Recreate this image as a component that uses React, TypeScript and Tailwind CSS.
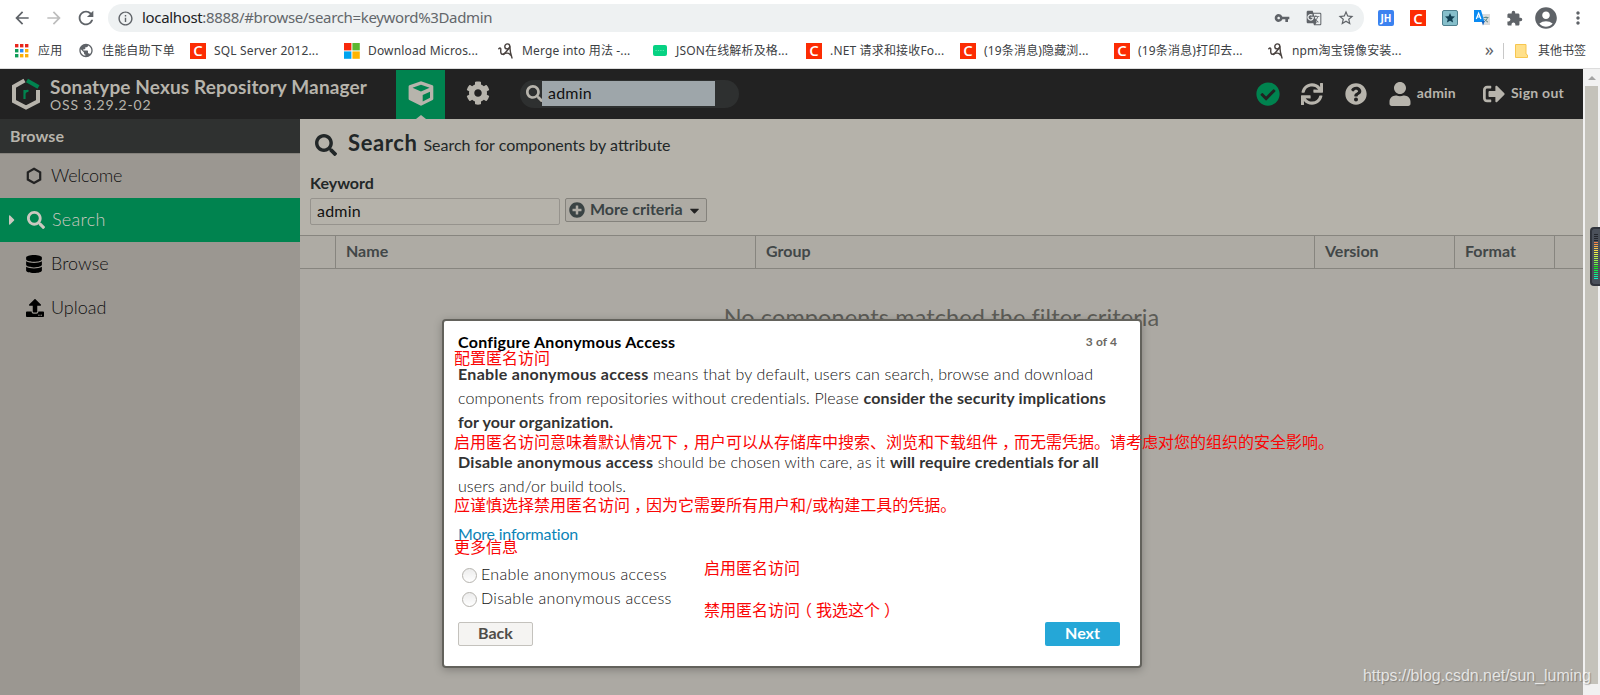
import type { ReactNode } from "react";
import {
    FaCaretDown,
    FaCaretRight,
    FaCheckCircle,
    FaCog,
    FaDatabase,
    FaPlusCircle,
    FaQuestionCircle,
    FaSearch,
    FaSignOutAlt,
    FaSync,
    FaUpload,
    FaUser,
} from "react-icons/fa";
import {
    MdAccountCircle,
    MdArrowBack,
    MdArrowForward,
    MdExtension,
    MdGTranslate,
    MdInfoOutline,
    MdMoreVert,
    MdPublic,
    MdRefresh,
    MdStar,
    MdStarBorder,
    MdVpnKey,
} from "react-icons/md";

function CsdnIcon() {
    return (
        <span className="flex h-4 w-4 items-center justify-center bg-[#fc2c03] font-['Open_Sans',sans-serif] text-[15px] leading-none font-semibold text-white">
            C
        </span>
    );
}

function AppsIcon() {
    const colors = ["#e8261c", "#e8261c", "#e8261c", "#0f9d58", "#2a8cf5", "#fbaf08", "#0f9d58", "#fbaf08", "#fbaf08"];
    return (
        <svg width="14" height="14" viewBox="0 0 14 14">
            {colors.map((color, i) => (
                <rect key={i} x={(i % 3) * 5} y={Math.floor(i / 3) * 5} width="3.4" height="3.4" fill={color} />
            ))}
        </svg>
    );
}

function WindowsIcon() {
    return (
        <svg width="16" height="16" viewBox="0 0 16 16">
            <path d="M0 0h7.4v7.4H0z" fill="#f8290c" />
            <path d="M8.4 0h7.4v7.4H8.4z" fill="#5cb832" />
            <path d="M0 8.4h7.4v7.4H0z" fill="#00a4ef" />
            <path d="M8.4 8.4h7.4v7.4H8.4z" fill="#ffb400" />
        </svg>
    );
}

function DoodleIcon() {
    return (
        <svg width="16" height="16" viewBox="0 0 16 16" fill="none" stroke="#4a4340" strokeWidth="1.4" strokeLinecap="round">
            <path d="M.8 5.800C2 4.500 3 5 2.800 6.800C2.500 9.500 3 11.500 4.800 11.200C7 10.800 9 8 11 5" />
            <circle cx="9.300" cy="3.400" r="2.500" />
            <path d="M11.800 3.500C12 8 12.500 11 14 15M5.500 11.500C8 9.500 11 9.800 12.500 12" />
        </svg>
    );
}

function JsonIcon() {
    return (
        <svg width="14" height="12" viewBox="0 0 14 12">
            <rect width="14" height="11" rx="2" fill="#06d283" />
            <path d="M2.500 5.500h9" stroke="#5be8b0" strokeWidth="1.200" strokeDasharray="1.200 1.200" />
        </svg>
    );
}

function FolderIcon() {
    return (
        <svg width="14" height="16" viewBox="0 0 14 16">
            <path d="M.5 1.500h10.500v9.500l1.500 1v2.500H.5z" fill="#ffe08a" stroke="#f7c64f" />
        </svg>
    );
}

function TranslateIcon() {
    return (
        <svg width="16" height="16" viewBox="0 0 16 16">
            <path d="M7 4h9v11H9z" fill="#dcdcdc" />
            <path d="M9.500 7.500h5M12 6.500v1M13.500 7.500c-.5 2-2 3.500-3 4M10.500 9c1 1.500 2 2.500 3.500 3" stroke="#5e8a8a" fill="none" />
            <path d="M0 0h7l3.500 12H0z" fill="#0a8bf2" />
            <path d="M7.500 11h3.300L9 15.500z" fill="#1565c0" />
            <path d="M2.300 9 4.600 3.200 6.900 9M3.200 7h2.800" stroke="#fff" strokeWidth="1.200" fill="none" />
        </svg>
    );
}

function NexusLogo() {
    return (
        <svg width="28" height="32" viewBox="0 0 28 32" fill="none" strokeWidth="4">
            <path d="M12.500 2.500 2 8.500v14.800L14 29.500l12-6.200V12" stroke="#b7b4ac" />
            <path d="M15 2.500 26.500 9" stroke="#00834f" />
            <path d="M12.500 21V12M12.500 15.500c.5-2 2-2.800 4-2.500" stroke="#00834f" strokeWidth="2.200" />
        </svg>
    );
}

function CubeIcon() {
    return (
        <svg width="26" height="25" viewBox="0 0 26 25">
            <path
                fillRule="evenodd"
                fill="#b7b4ac"
                d="M13 .3 24.500 4.300Q25.300 4.600 25.300 5.500V17.800Q25.300 18.600 24.600 19L13.600 24.500Q13 24.800 12.400 24.500L1.300 19Q.6 18.600.6 17.800V5.500Q.6 4.600 1.400 4.300ZM13 3.700 4.500 6.800 13 10.500 21.600 6.800ZM22 10.700 14.700 14V20.500L22 16.800Z"
            />
        </svg>
    );
}

function HexagonIcon() {
    return (
        <svg width="16" height="18" viewBox="0 0 16 18" fill="none" stroke="#222" strokeWidth="2.200">
            <path d="M8 1.800 14.200 5.300v7.200L8 16 1.800 12.500V5.300z" />
        </svg>
    );
}

const bookmarks: { icon: ReactNode; title: string; width: string }[] = [
    { icon: <AppsIcon />, title: "应用", width: "w-16" },
    { icon: <MdPublic size={17} color="#5f6368" />, title: "佳能自助下单", width: "w-28" },
    { icon: <CsdnIcon />, title: "SQL Server 2012...", width: "w-[154px]" },
    { icon: <WindowsIcon />, title: "Download Micros...", width: "w-[154px]" },
    { icon: <DoodleIcon />, title: "Merge into 用法 -...", width: "w-[154px]" },
    { icon: <JsonIcon />, title: "JSON在线解析及格...", width: "w-[154px]" },
    { icon: <CsdnIcon />, title: ".NET 请求和接收Fo...", width: "w-[154px]" },
    { icon: <CsdnIcon />, title: "(19条消息)隐藏浏...", width: "w-[154px]" },
    { icon: <CsdnIcon />, title: "(19条消息)打印去...", width: "w-[154px]" },
    { icon: <DoodleIcon />, title: "npm淘宝镜像安装...", width: "w-[154px]" },
];

function BrowserBar() {
    return (
        <div className="h-[69px] shrink-0 border-b border-[#dcdcdc] bg-white font-['Noto_Sans','Noto_Sans_CJK_SC',sans-serif]">
            <div className="flex h-9 items-center pr-[14px] pl-3 text-[#5f6368]">
                <MdArrowBack size={20} />
                <MdArrowForward size={20} className="ml-3 text-[#bdbdbd]" />
                <MdRefresh size={22} className="ml-[11px]" />
                <div className="ml-[11px] flex h-7 flex-1 items-center rounded-full bg-[#eef1f2] pr-[10px] pl-[9px]">
                    <MdInfoOutline size={17} />
                    <span className="-mt-0.5 ml-2 text-[15px] tracking-[-0.34px] text-[#63676b]">
                        <span className="text-[#202124]">localhost</span>:8888/#browse/search=keyword%3Dadmin
                    </span>
                    <div className="ml-auto flex items-center gap-4">
                        <MdVpnKey size={16} />
                        <MdGTranslate size={16} />
                        <MdStarBorder size={18} className="-mx-px" />
                    </div>
                </div>
                <div className="ml-[14px] flex items-center gap-4">
                    <span className="flex h-4 w-4 items-center justify-center rounded-xs bg-[#3b82f0] text-[10px] font-bold text-white">JH</span>
                    <CsdnIcon />
                    <span className="flex h-4 w-4 items-center justify-center rounded-xs border border-[#4d7f8d] bg-[#86bfcb] text-[#123f52]">
                        <MdStar size={12} className="shrink-0" />
                    </span>
                    <TranslateIcon />
                    <MdExtension size={17} className="-mr-px" />
                    <MdAccountCircle size={26} className="-mx-[5px]" />
                    <MdMoreVert size={20} className="-mx-[2px]" />
                </div>
            </div>
            <div className="flex h-[29px] items-center pr-[14px] pl-[14px] text-xs whitespace-nowrap text-[#3c4043]">
                {bookmarks.map((bookmark) => (
                    <div key={bookmark.title} className={`flex shrink-0 items-center gap-2 ${bookmark.width}`}>
                        <span className="flex w-4 shrink-0 justify-center">{bookmark.icon}</span>
                        <span className="tracking-[0.16px]">{bookmark.title}</span>
                    </div>
                ))}
                <span className="mb-1 ml-auto text-lg leading-none text-[#5f6368]">»</span>
                <span className="ml-[9px] h-4 w-px bg-[#c8c8c8]" />
                <span className="ml-[11px]">
                    <FolderIcon />
                </span>
                <span className="ml-[9px]">其他书签</span>
            </div>
        </div>
    );
}

function Header() {
    return (
        <div className="flex h-[50px] shrink-0 items-center bg-[#222] pr-[19px] pl-[12px] text-[#b7b4ac]">
            <NexusLogo />
            <div className="ml-[10px] w-[346px] whitespace-nowrap">
                <div className="pt-px text-[19px] leading-5 font-bold tracking-[0.13px]">Sonatype Nexus Repository Manager</div>
                <div className="text-sm leading-4 tracking-[0.85px]">OSS 3.29.2-02</div>
            </div>
            <div className="mt-px flex h-[49px] w-[49px] flex-col items-center bg-[#00834f] pt-[11px]">
                <CubeIcon />
                <span className="mt-[9px] h-0 w-0 border-x-[5px] border-b-4 border-x-transparent border-b-[#b5b2aa]" />
            </div>
            <FaCog size={24} className="-mt-0.5 ml-[21px]" />
            <div className="ml-[30px] flex h-7 w-[219px] items-center rounded-full bg-[#2e3030] pl-[6px]">
                <FaSearch size={17} className="-mt-px" />
                <div className="-mt-0.5 -ml-px h-[25px] w-[173px] bg-[#9ea6aa] pl-1.5 leading-[24px] tracking-[0.2px] text-[#111]">admin</div>
            </div>
            <div className="ml-auto flex items-center pb-px text-sm font-bold">
                <FaCheckCircle size={24} color="#00834f" />
                <FaSync size={22} className="ml-[21px]" />
                <FaQuestionCircle size={22} className="ml-[22px]" />
                <FaUser size={24} className="ml-[21px]" />
                <span className="mb-px ml-[5px] tracking-[0.2px]">admin</span>
                <FaSignOutAlt size={22} className="ml-[27px]" />
                <span className="mb-px ml-1.5 tracking-[0.25px]">Sign out</span>
            </div>
        </div>
    );
}

function Sidebar() {
    return (
        <div className="w-[300px] shrink-0 bg-[#9b9791] text-lg font-light text-[#111]">
            <div className="h-[35px] border-b border-[#85827c] bg-[#2f3130] pl-[10px] text-base leading-[34px] font-bold tracking-[0.1px] text-[#b7b4ac]">
                Browse
            </div>
            <div className="flex h-11 items-center pl-[26px]">
                <HexagonIcon />
                <span className="mb-[3px] ml-[9px] tracking-[-0.25px]">Welcome</span>
            </div>
            <div className="flex h-11 items-center bg-[#00834f] pl-[7px] text-[#cbc8c0]">
                <FaCaretRight size={16} className="w-2.5" />
                <FaSearch size={18} className="ml-[10px]" />
                <span className="mb-[3px] ml-[7px] tracking-[0.3px]">Search</span>
            </div>
            <div className="flex h-11 items-center pl-[26px]">
                <FaDatabase size={18} className="w-4" color="#000" />
                <span className="mb-[3px] ml-[9px]">Browse</span>
            </div>
            <div className="flex h-11 items-center pl-[26px]">
                <FaUpload size={18} className="-mt-px" color="#000" />
                <span className="mb-[3px] ml-[7px]">Upload</span>
            </div>
        </div>
    );
}

function SearchPanel() {
    return (
        <div className="min-w-0 flex-1 bg-[#aca9a3]">
            <div className="h-[116px] bg-[#b5b2aa] pl-[10px] text-[#222728]">
                <div className="flex h-[50px] items-baseline pt-[9px] pl-[5px]">
                    <FaSearch size={22} className="translate-y-[5px]" />
                    <span className="ml-[11px] text-[22px] leading-[30px] font-bold tracking-[0.6px]">Search</span>
                    <span className="ml-1.5">Search for components by attribute</span>
                </div>
                <div className="flex h-[29px] items-center pb-px font-bold">Keyword</div>
                <div className="flex items-start">
                    <div className="h-[27px] w-[250px] rounded-xs border border-[#96938d] pl-1.5 leading-6 tracking-[0.2px] text-[#111]">admin</div>
                    <div className="ml-[5px] flex h-6 w-[142px] items-center rounded-xs border border-[#84827c] bg-[#aeaba4] pl-[3px] font-bold text-[#3a4344]">
                        <FaPlusCircle size={16} />
                        <span className="mb-0.5 ml-[5px] whitespace-nowrap">More criteria</span>
                        <FaCaretDown size={15} className="ml-1 text-[#222]" />
                    </div>
                </div>
            </div>
            <div className="flex h-[34px] border-y border-[#87857f] bg-[#aeaba4] leading-[30px] font-bold text-[#424748] *:border-r *:border-[#87857f] *:pl-[10px]">
                <div className="w-9" />
                <div className="w-[420px]">Name</div>
                <div className="w-[559px]">Group</div>
                <div className="w-[140px]">Version</div>
                <div className="w-[100px]">Format</div>
            </div>
            <div className="mt-8 text-center text-[23.5px] leading-8 tracking-[0.1px] text-[#5c5c57]">No components matched the filter criteria</div>
        </div>
    );
}

function ScrollBar() {
    return (
        <div className="flex w-[17px] shrink-0 flex-col items-center bg-[#f1f1f1]">
            <div className="flex h-[17px] items-center">
                <span className="h-0 w-0 border-x-4 border-b-4 border-x-transparent border-b-[#a3a3a3]" />
            </div>
            <div className="h-[598px] w-[13px] bg-[#c4c2ba]" />
        </div>
    );
}

function LevelMeter() {
    const levels = Array.from({ length: 23 }, (_, i) => i);
    return (
        <div className="absolute top-[227px] left-[1590px] flex h-[59px] w-3 flex-col gap-px rounded-l-sm border-2 border-r-0 border-[#30343c] bg-[#4a505a] pt-[5px] pl-0.5">
            {levels.map((i) => (
                <span
                    key={i}
                    className="h-px w-1"
                    style={{ background: i < 4 ? "#23262c" : `hsl(${20 + (i - 4) * 8.2} 90% ${i < 16 ? 62 : 50}%)` }}
                />
            ))}
        </div>
    );
}

function Radio({ label }: { label: string }) {
    return (
        <label className="flex h-6 items-center pl-1">
            <span className="mt-[3px] h-[15px] w-[15px] rounded-full border border-[#b5b3ae] bg-linear-to-b from-[#ececec] to-white" />
            <span className="ml-1 tracking-[0.3px]">{label}</span>
        </label>
    );
}

function AnonymousAccessDialog() {
    return (
        <div className="absolute top-[319px] left-[442px] h-[349px] w-[700px] rounded border-2 border-[#63625c] bg-white px-[14px] pt-[9px] leading-6 font-light whitespace-nowrap text-[#111] shadow-[0_2px_8px_rgba(0,0,0,0.25)]">
            <div className="flex justify-between">
                <span className="font-bold tracking-[0.26px] text-black">Configure Anonymous Access</span>
                <span className="mr-[9px] text-xs leading-6 font-bold tracking-[0.1px] text-[#6b6862]">3 of 4</span>
            </div>
            <p className="mt-2 tracking-[0.16px]">
                <b className="font-bold tracking-[0.3px] text-[#333]">Enable anonymous access</b> means that by default, users can search, browse and download
                <br />
                <span className="tracking-[0.12px]">components from repositories without credentials. Please </span>
                <b className="font-bold tracking-[0.15px] text-[#333]">consider the security implications</b>
                <br />
                <b className="font-bold tracking-[0.15px] text-[#333]">for your organization.</b>
            </p>
            <p className="mt-4 tracking-[0.12px]">
                <b className="font-bold tracking-[0.27px] text-[#333]">Disable anonymous access</b> should be chosen with care, as it{" "}
                <b className="font-bold tracking-[0.12px] text-[#333]">will require credentials for all</b>
                <br />
                <span className="tracking-[0.08px]">users and/or build tools.</span>
            </p>
            <a className="mt-6 block font-normal tracking-[-0.2px] text-[#0b84b8]">More information</a>
            <div className="mt-4">
                <Radio label="Enable anonymous access" />
                <Radio label="Disable anonymous access" />
            </div>
            <div className="mt-3 flex justify-between pr-[6px] font-bold">
                <button className="h-6 w-[75px] rounded-xs border border-[#c4c2bd] bg-[#f5f4f2] pb-0.5 leading-5 text-[#4f4d49]">Back</button>
                <button className="h-6 w-[75px] rounded-xs bg-[#25a7d7] pb-0.5 leading-[22px] text-white">Next</button>
            </div>
        </div>
    );
}

// punctuation mark centred in a full-width cell
function Mark({ children }: { children: string }) {
    return <span className="px-1 [font-feature-settings:'halt']">{children}</span>;
}

function Notes() {
    return (
        <div className="font-['Noto_Sans_CJK_SC',sans-serif] leading-5 whitespace-nowrap text-[#fa0505]">
            <span className="absolute top-[347px] left-[454px]">配置匿名访问</span>
            <span className="absolute top-[431px] left-[454px]">
                启用匿名访问意味着默认情况下<Mark>，</Mark>用户可以从存储库中搜索、浏览和下载组件<Mark>，</Mark>而无需凭据。请考虑对您的组织的安全影响。
            </span>
            <span className="absolute top-[494px] left-[454px]">
                应谨慎选择禁用匿名访问<Mark>，</Mark>因为它需要所有用户和/或构建工具的凭据。
            </span>
            <span className="absolute top-[536px] left-[454px]">更多信息</span>
            <span className="absolute top-[557px] left-[704px]">启用匿名访问</span>
            <span className="absolute top-[599px] left-[704px]">
                禁用匿名访问<Mark>（</Mark>我选这个<Mark>）</Mark>
            </span>
        </div>
    );
}

function App() {
    return (
        <div className="relative flex h-[695px] w-[1600px] flex-col overflow-hidden font-[Lato,sans-serif]">
            <BrowserBar />
            <div className="flex min-h-0 flex-1">
                <div className="flex min-w-0 flex-1 flex-col">
                    <Header />
                    <div className="flex min-h-0 flex-1">
                        <Sidebar />
                        <SearchPanel />
                    </div>
                </div>
                <ScrollBar />
            </div>
            <LevelMeter />
            <AnonymousAccessDialog />
            <Notes />
            <span className="absolute top-[664px] left-[1363px] font-['Liberation_Sans',sans-serif] leading-6 tracking-[-0.05px] text-white/75 [text-shadow:1px_1px_1px_rgba(0,0,0,0.25)]">
                https://blog.csdn.net/sun_luming
            </span>
        </div>
    );
}

export default App;
